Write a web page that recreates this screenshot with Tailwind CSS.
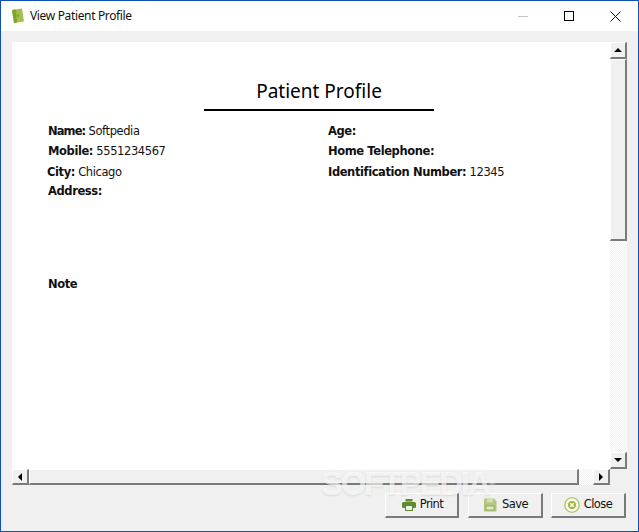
<!DOCTYPE html>
<html lang="en">
<head>
    <meta charset="UTF-8">
    <title>View Patient Profile</title>
    <script src="https://cdn.jsdelivr.net/npm/@tailwindcss/browser@4"></script>
</head>
<body class="bg-[#f0f0f0]">

    <div class="relative w-[639px] h-[532px] overflow-hidden flex flex-col border border-[#0f50b4] bg-[#f0f0f0] font-['DejaVu_Sans',sans-serif] text-[11.5px] text-[#111]">

        <!-- Title bar -->
        <div class="h-[30px] shrink-0 bg-white flex items-center pl-[10px]">
            <svg width="14" height="16" viewBox="0 0 14 16"><path d="M1 2 L11 0.5 L13 13.5 L3 15 Z" fill="#a3c14a"/><path d="M1 2 L5 1.4 L6 14.4 L3 15 Z" fill="#7fa32c"/><path d="M7 6v3" stroke="#6b8a24" stroke-width="1"/></svg>
            <span class="ml-[5px] font-['Noto_Sans',sans-serif] text-[12px] tracking-[-0.35px] text-[#111]">View Patient Profile</span>
            <div class="ml-auto flex items-center">
                <div class="w-[46px] h-[30px] flex items-center justify-center"><div class="w-[10px] h-px bg-[#c4c4c4]"></div></div>
                <div class="w-[46px] h-[30px] flex items-center justify-center"><div class="w-[10px] h-[10px] border border-black"></div></div>
                <div class="w-[46px] h-[30px] flex items-center justify-center">
                    <svg width="11" height="11" viewBox="0 0 11 11"><path d="M0.5 0.5 L10.5 10.5 M10.5 0.5 L0.5 10.5" stroke="#111" stroke-width="1"/></svg>
                </div>
            </div>
        </div>

        <!-- Report area -->
        <div class="flex ml-[11px] mt-[11px]">
            <div class="w-[598px] h-[427px] bg-white flex flex-col">
                <div class="w-[230px] ml-[192px] mt-[35px]">
                    <h1 class="text-center font-['Noto_Sans',sans-serif] text-[19px] leading-[28px] text-black">Patient Profile</h1>
                    <div class="h-[2px] bg-black mt-[4px]"></div>
                </div>
                <div class="grid grid-cols-[280px_1fr] ml-[36px] mt-[10px] tracking-[-0.4px]">
                    <div class="flex flex-col">
                        <div class="h-[20px] leading-[20px]"><b class="tracking-[-0.9px]">Name:</b> Softpedia</div>
                        <div class="h-[20px] leading-[20px]"><b>Mobile:</b> 5551234567</div>
                        <div class="h-[20px] leading-[20px] mt-px -ml-px"><b>City:</b> Chicago</div>
                        <div class="h-[19px] leading-[19px]"><b>Address:</b></div>
                    </div>
                    <div class="flex flex-col">
                        <div class="h-[20px] leading-[20px]"><b>Age:</b></div>
                        <div class="h-[20px] leading-[20px]"><b>Home Telephone:</b></div>
                        <div class="h-[20px] leading-[20px] mt-px"><b>Identification Number:</b> 12345</div>
                    </div>
                </div>
                <div class="ml-[36px] mt-[73px] h-[20px] leading-[20px] tracking-[-0.4px]"><b>Note</b></div>
            </div>

            <!-- Vertical scrollbar -->
            <div class="w-[17px] h-[427px] flex flex-col bg-[repeating-conic-gradient(#f0f0f0_0_25%,#ffffff_0_50%)] bg-[length:2px_2px]">
                <div class="h-[17px] shrink-0 bg-[#f0f0f0] border-t border-l border-white border-r-2 border-b-2 border-r-[#7a7a7a] border-b-[#7a7a7a] flex items-center justify-center">
                    <div class="w-0 h-0 border-x-[4px] border-x-transparent border-b-[4px] border-b-black"></div>
                </div>
                <div class="h-[182px] shrink-0 bg-[#f0f0f0] border-t border-l border-white border-r-2 border-b-2 border-r-[#7a7a7a] border-b-[#7a7a7a]"></div>
                <div class="flex-1"></div>
                <div class="h-[17px] shrink-0 bg-[#f0f0f0] border-t border-l border-white border-r-2 border-b-2 border-r-[#7a7a7a] border-b-[#7a7a7a] flex items-center justify-center">
                    <div class="w-0 h-0 border-x-[4px] border-x-transparent border-t-[4px] border-t-black"></div>
                </div>
            </div>
        </div>

        <!-- Horizontal scrollbar -->
        <div class="flex ml-[11px] w-[598px] h-[16px] bg-[repeating-conic-gradient(#f0f0f0_0_25%,#ffffff_0_50%)] bg-[length:2px_2px]">
            <div class="w-[17px] shrink-0 bg-[#f0f0f0] border-t border-l border-white border-r-2 border-b-2 border-r-[#7a7a7a] border-b-[#7a7a7a] flex items-center justify-center">
                <div class="w-0 h-0 border-y-[4px] border-y-transparent border-r-[4px] border-r-black"></div>
            </div>
            <div class="w-[550px] shrink-0 bg-[#f0f0f0] border-t border-l border-white border-r-2 border-b-2 border-r-[#7a7a7a] border-b-[#7a7a7a]"></div>
            <div class="flex-1"></div>
            <div class="w-[17px] shrink-0 bg-[#f0f0f0] border-t border-l border-white border-r-2 border-b-2 border-r-[#7a7a7a] border-b-[#7a7a7a] flex items-center justify-center">
                <div class="w-0 h-0 border-y-[4px] border-y-transparent border-l-[4px] border-l-black"></div>
            </div>
        </div>

        <!-- Buttons -->
        <div class="flex justify-end mt-[8px] pr-[12px] tracking-[-0.6px]">
            <button class="w-[74px] h-[25px] mr-[9px] pl-[2px] flex items-center justify-center gap-[4px] bg-[#f0f0f0] border-t border-l border-white border-r-2 border-b-2 border-r-[#7a7a7a] border-b-[#7a7a7a]">
                <svg width="14" height="12" viewBox="0 0 14 12"><path d="M3.5 0h7v2.5h-7z" fill="#5f8a2e"/><rect x="0" y="3" width="14" height="6" rx="1.5" fill="#5f8a2e"/><rect x="3.5" y="6.5" width="7" height="5" fill="#eef2e6" stroke="#5f8a2e"/></svg>
                <span>Print</span>
            </button>
            <button class="w-[75px] h-[25px] mr-[8px] pl-[1px] flex items-center justify-center gap-[5px] bg-[#f0f0f0] border-t border-l border-white border-r-2 border-b-2 border-r-[#7a7a7a] border-b-[#7a7a7a]">
                <svg width="14" height="14" viewBox="0 0 14 14"><path d="M1 0.5h10l2.5 2.5v10.5H1z" fill="#b4c67c"/><rect x="4" y="0.5" width="6" height="4" fill="#d3deaf"/><rect x="3" y="8" width="8" height="4" fill="#e3e9cd" stroke="#8aa04c" stroke-width="0.8"/></svg>
                <span>Save</span>
            </button>
            <button class="w-[75px] h-[25px] flex items-center justify-center gap-[4px] bg-[#f0f0f0] border-t border-l border-white border-r-2 border-b-2 border-r-[#7a7a7a] border-b-[#7a7a7a]">
                <svg width="16" height="16" viewBox="0 0 16 16"><circle cx="8" cy="8" r="7.2" fill="#fbfcf2" stroke="#a4bc52" stroke-width="1.1"/><circle cx="8" cy="8" r="4" fill="#9ab83c"/><path d="M6.2 6.2l3.6 3.6M9.8 6.2l-3.6 3.6" stroke="#fff" stroke-width="1.5"/></svg>
                <span>Close</span>
            </button>
        </div>

        <!-- Watermark -->
        <div class="absolute left-[320px] top-[466px] font-['Liberation_Sans',sans-serif] font-bold text-[33px] leading-[34px] tracking-[-2.3px] text-white/65 [text-shadow:0_1px_2px_rgba(0,0,0,0.1)]">SOFTPEDIA<span class="text-[8px] align-top">®</span></div>
    </div>

</body>
</html>
